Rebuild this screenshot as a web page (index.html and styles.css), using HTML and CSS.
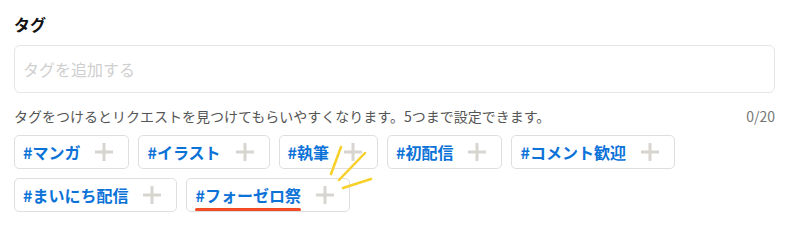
FILE: index.html
```html
<!DOCTYPE html>
<html lang="ja">
<head>
<meta charset="utf-8">
<link rel="stylesheet" href="styles.css">
</head>
<body>
<div class="field">
  <h2 class="label">タグ</h2>
  <div class="input">タグを追加する</div>
  <div class="help">
    <span>タグをつけるとリクエストを見つけてもらいやすくなります。5つまで設定できます。</span>
    <span class="count">0/20</span>
  </div>
  <div class="tags">
    <div class="tag"><span class="tag-text">#マンガ</span><svg class="plus" viewBox="0 0 20 20"><path d="M10 1v18M1 10h18"/></svg></div>
    <div class="tag"><span class="tag-text">#イラスト</span><svg class="plus" viewBox="0 0 20 20"><path d="M10 1v18M1 10h18"/></svg></div>
    <div class="tag"><span class="tag-text">#執筆</span><svg class="plus" viewBox="0 0 20 20"><path d="M10 1v18M1 10h18"/></svg></div>
    <div class="tag"><span class="tag-text">#初配信</span><svg class="plus" viewBox="0 0 20 20"><path d="M10 1v18M1 10h18"/></svg></div>
    <div class="tag"><span class="tag-text">#コメント歓迎</span><svg class="plus" viewBox="0 0 20 20"><path d="M10 1v18M1 10h18"/></svg></div>
    <div class="tag"><span class="tag-text">#まいにち配信</span><svg class="plus" viewBox="0 0 20 20"><path d="M10 1v18M1 10h18"/></svg></div>
    <div class="tag"><span class="tag-text marked">#フォーゼロ祭</span><svg class="plus" viewBox="0 0 20 20"><path d="M10 1v18M1 10h18"/></svg></div>
  </div>
  <svg class="sparkle" width="60" height="50" viewBox="0 0 60 50"><path d="M15 5L5 32M39 11L13 38M45 37L17 46"/></svg>
</div>
</body>
</html>
```

FILE: styles.css
```css
* { box-sizing: border-box; }
html, body { margin: 0; background: #fff; }
body {
  font-family: "Noto Sans CJK JP", "Noto Sans", sans-serif;
  color: #222;
  padding: 12px 25px 0 14px;
}
.field { position: relative; }
.label {
  margin: 0;
  font-size: 16px;
  font-weight: 700;
  line-height: 24px;
  color: #111;
}
.input {
  margin-top: 9px;
  height: 48px;
  border: 1px solid #e6e6e6;
  border-radius: 6px;
  padding: 0 8px;
  display: flex;
  align-items: center;
  font-size: 16px;
  color: #cfcfcf;
}
.help {
  margin-top: 12px;
  display: flex;
  justify-content: space-between;
  font-size: 14px;
  line-height: 22px;
  color: #555;
}
.count { color: #777; }
.tags {
  margin-top: 8px;
  display: flex;
  flex-wrap: wrap;
  gap: 9px;
}
.tag {
  height: 34px;
  border: 1px solid #e0deda;
  border-radius: 5px;
  padding: 0 14px 0 8px;
  display: flex;
  align-items: center;
  gap: 14px;
}
.tag-text {
  font-size: 16px;
  font-weight: 700;
  color: #0b72d8;
  line-height: 20px;
  position: relative;
}
.tag-text.marked::after {
  content: "";
  position: absolute;
  left: 0;
  right: 0;
  bottom: -6px;
  height: 3px;
  border-radius: 2px;
  background: #f24b25;
}
.plus {
  width: 20px;
  height: 20px;
  stroke: #d8d5d1;
  stroke-width: 3;
  fill: none;
}
.sparkle {
  position: absolute;
  left: 312px;
  top: 130px;
  stroke: #f7d02a;
  stroke-width: 2.5;
  stroke-linecap: round;
  fill: none;
}
```
